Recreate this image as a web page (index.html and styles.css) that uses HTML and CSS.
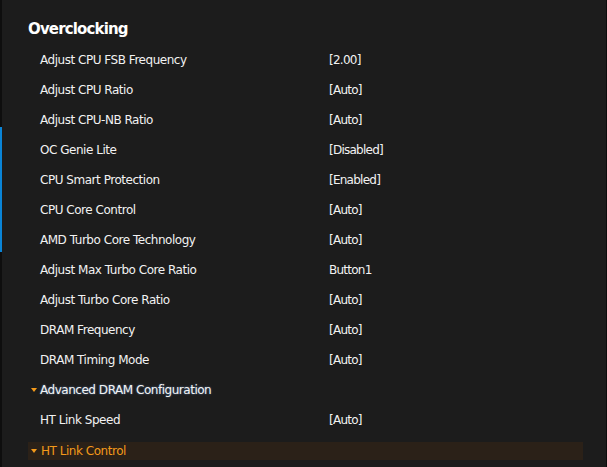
FILE: index.html
```html
<!DOCTYPE html>
<html>
<head>
<meta charset="utf-8">
<link rel="stylesheet" href="styles.css">
</head>
<body>
<div class="frame">
  <div class="edge"><div class="edge-mark"></div></div>
  <div class="panel">
    <h1 class="title">Overclocking</h1>
    <div class="list">
      <div class="row"><span class="label">Adjust CPU FSB Frequency</span><span class="value">[2.00]</span></div>
      <div class="row"><span class="label">Adjust CPU Ratio</span><span class="value">[Auto]</span></div>
      <div class="row"><span class="label">Adjust CPU-NB Ratio</span><span class="value">[Auto]</span></div>
      <div class="row"><span class="label">OC Genie Lite</span><span class="value">[Disabled]</span></div>
      <div class="row"><span class="label">CPU Smart Protection</span><span class="value">[Enabled]</span></div>
      <div class="row"><span class="label">CPU Core Control</span><span class="value">[Auto]</span></div>
      <div class="row"><span class="label">AMD Turbo Core Technology</span><span class="value">[Auto]</span></div>
      <div class="row"><span class="label">Adjust Max Turbo Core Ratio</span><span class="value">Button1</span></div>
      <div class="row"><span class="label">Adjust Turbo Core Ratio</span><span class="value">[Auto]</span></div>
      <div class="row"><span class="label">DRAM Frequency</span><span class="value">[Auto]</span></div>
      <div class="row"><span class="label">DRAM Timing Mode</span><span class="value">[Auto]</span></div>
      <div class="row group"><span class="caret"></span><span class="label glow">Advanced DRAM Configuration</span></div>
      <div class="row"><span class="label">HT Link Speed</span><span class="value">[Auto]</span></div>
      <div class="row group active"><span class="caret"></span><span class="label">HT Link Control</span></div>
    </div>
  </div>
  <div class="edge-right"></div>
</div>
</body>
</html>
```
FILE: styles.css
```css
html, body {
  margin: 0;
  padding: 0;
  background: #1c1c1c;
}
body {
  width: 607px;
  height: 467px;
  overflow: hidden;
  font-family: Tahoma, "DejaVu Sans", "Liberation Sans", sans-serif;
  color: #f2f2f2;
}
.frame {
  display: flex;
  height: 467px;
}
.edge {
  width: 2px;
  background: #0e0e0e;
  padding-top: 127px;
  box-sizing: border-box;
}
.edge-mark {
  width: 2px;
  height: 125px;
  background: #0a84d6;
}
.edge-right {
  width: 1px;
  background: #0c0c0c;
}
.panel {
  flex: 1;
  padding: 13px 23px 0 26px;
}
.title {
  margin: 0;
  height: 32px;
  line-height: 32px;
  font-family: "DejaVu Sans", sans-serif;
  font-size: 15px;
  font-weight: bold;
  color: #ffffff;
  letter-spacing: -0.85px;
}
.list {
  display: flex;
  flex-direction: column;
  padding-top: 0;
}
.row {
  display: flex;
  align-items: center;
  height: 30px;
  padding-left: 12px;
  font-family: "DejaVu Sans", sans-serif;
  font-size: 12px;
  letter-spacing: -0.47px;
}
.label {
  width: 289px;
}
.value {
  letter-spacing: -0.75px;
}
.group {
  padding-left: 3px;
}
.caret {
  width: 0;
  height: 0;
  border-left: 3px solid transparent;
  border-right: 3px solid transparent;
  border-top: 4px solid #f49a1a;
  margin-right: 3px;
}
.glow {
  text-shadow: 0 0 2px #5d7fa8;
}
.active {
  height: 18px;
  margin-top: 7px;
  background: #2b2118;
  color: #f49a1a;
}
.active .caret {
  margin-right: 4px;
}
```
